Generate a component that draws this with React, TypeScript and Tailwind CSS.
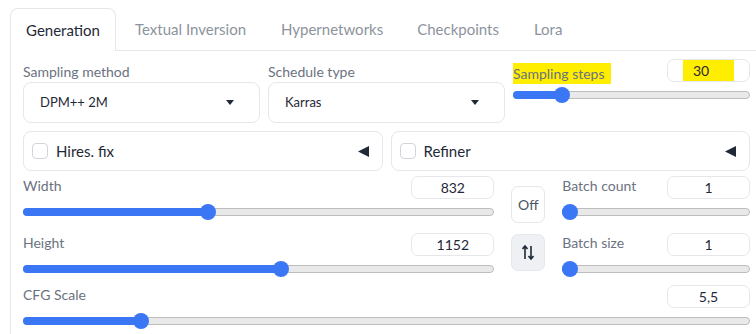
import React from "react";

const font = { fontFamily: "Lato, 'Liberation Sans', sans-serif" };

function Slider({ pct }: { pct: number }) {
  return (
    <div className="relative h-[16px] mt-[5px] w-full">
      <div className="absolute left-0 right-0 top-[4px] h-[8px] rounded-full bg-[#e9e9e9] border border-[#bdbdbd]" />
      <div
        className="absolute left-0 top-[4px] h-[8px] rounded-l-full bg-[#3b76f5]"
        style={{ width: `calc(${pct} * (100% - 16px) + 8px)` }}
      />
      <div
        className="absolute top-0 w-[16px] h-[16px] rounded-full bg-[#3b76f5]"
        style={{ left: `calc(${pct} * (100% - 16px))` }}
      />
    </div>
  );
}

function NumBox({ value }: { value: React.ReactNode }) {
  return (
    <div className="w-[83px] h-[23px] rounded-[7px] border border-[#e5e7eb] flex items-center justify-center text-[14px] text-[#1f2937]">
      {value}
    </div>
  );
}

function SliderBlock({
  label,
  value,
  pct,
}: {
  label: React.ReactNode;
  value: React.ReactNode;
  pct: number;
}) {
  return (
    <div className="flex flex-col">
      <div className="flex items-center justify-between h-[23px]">
        <span className="text-[14px] text-[#6b7280] -mt-[4px]">{label}</span>
        <NumBox value={value} />
      </div>
      <Slider pct={pct} />
    </div>
  );
}

function Dropdown({ label, value }: { label: string; value: string }) {
  return (
    <div className="flex-1 flex flex-col">
      <div className="h-[20px] text-[14px] text-[#6b7280] leading-[20px]">{label}</div>
      <div className="h-[41px] rounded-[8px] border border-[#e5e7eb] flex items-center justify-between pl-[16px] pr-[25px] text-[13px] text-[#1f2937]">
        <span>{value}</span>
        <svg width="8" height="5" viewBox="0 0 8 5">
          <path d="M0 0 L8 0 L4 5 Z" fill="#1f2937" />
        </svg>
      </div>
    </div>
  );
}

function Accordion({ label }: { label: string }) {
  return (
    <div className="flex-1 h-[40px] rounded-[8px] border border-[#e5e7eb] flex items-center pl-[8px] pr-[13px]">
      <div className="w-[16px] h-[16px] rounded-[4px] border border-[#d1d5db] bg-white" />
      <span className="ml-[8px] text-[15px] text-[#1f2937]">{label}</span>
      <div className="flex-1" />
      <svg width="11" height="11" viewBox="0 0 11 11">
        <path d="M0 5.5 L11 0 L11 11 Z" fill="#1f2937" />
      </svg>
    </div>
  );
}

export default function App() {
  return (
    <div className="w-[756px] h-[334px] bg-white overflow-hidden pl-[10px] pt-[9px]" style={font}>
      {/* tabs */}
      <div className="flex items-end h-[42px]">
        <div className="h-[43px] w-[106px] rounded-t-[8px] border border-b-0 border-[#e5e7eb] bg-white flex items-center justify-center text-[15px] text-[#1f2937] relative z-10">
          Generation
        </div>
        <div className="flex-1 h-full flex items-center border-b border-[#e5e7eb] text-[15px] text-[#8d939d]">
          <span className="ml-[19px]">Textual Inversion</span>
          <span className="ml-[35px]">Hypernetworks</span>
          <span className="ml-[34px]">Checkpoints</span>
          <span className="ml-[35px]">Lora</span>
        </div>
      </div>
      {/* panel */}
      <div className="border-l border-[#e5e7eb] pl-[12px] pr-[6px] pt-[11px] h-[300px]">
        {/* row 1 */}
        <div className="flex gap-[8px]">
          <Dropdown label="Sampling method" value="DPM++ 2M" />
          <Dropdown label="Schedule type" value="Karras" />
          <div className="flex-1 flex flex-col">
            <div className="flex items-center justify-between h-[23px] -mt-[3px]">
              <span className="text-[14px] text-[#6b7280] bg-[#ffee00] pr-[6px] mt-[6px]">Sampling steps</span>
              <div className="w-[83px] h-[23px] rounded-[7px] border border-[#e5e7eb] flex items-center justify-center text-[14px] text-[#1f2937]">
                <span className="bg-[#ffee00] pl-[10px] pr-[25px]">30</span>
              </div>
            </div>
            <Slider pct={0.187} />
          </div>
        </div>
        {/* row 2 */}
        <div className="flex gap-[8px] mt-[8px]">
          <Accordion label="Hires. fix" />
          <Accordion label="Refiner" />
        </div>
        {/* row 3-4 */}
        <div className="flex mt-[5px]">
          <div className="w-[472px] flex flex-col">
            <SliderBlock label="Width" value="832" pct={0.388} />
            <div className="mt-[13px]">
              <SliderBlock label="Height" value="1152" pct={0.55} />
            </div>
          </div>
          <div className="w-[34px] ml-[17px] flex flex-col pt-[10px]">
            <div className="h-[37px] rounded-[7px] border border-[#e5e7eb] bg-white flex items-center justify-center text-[14px] text-[#4b5563]">
              Off
            </div>
            <div className="h-[37px] mt-[11px] rounded-[7px] border border-[#e5e7eb] bg-[#eef0f3] flex items-center justify-center">
              <svg width="12" height="15" viewBox="0 0 12 15">
                <path d="M3 14 L3 1.5 M0.5 4 L3 1 L5.5 4" stroke="#1f2937" strokeWidth="1.6" fill="none" />
                <path d="M9 1 L9 13.5 M6.5 11 L9 14 L11.5 11" stroke="#1f2937" strokeWidth="1.6" fill="none" />
              </svg>
            </div>
          </div>
          <div className="w-[188px] ml-[17px] flex flex-col">
            <SliderBlock label="Batch count" value="1" pct={0} />
            <div className="mt-[13px]">
              <SliderBlock label="Batch size" value="1" pct={0} />
            </div>
          </div>
        </div>
        {/* row 5 */}
        <div className="mt-[8px]">
          <SliderBlock label="CFG Scale" value="5,5" pct={0.155} />
        </div>
      </div>
    </div>
  );
}
